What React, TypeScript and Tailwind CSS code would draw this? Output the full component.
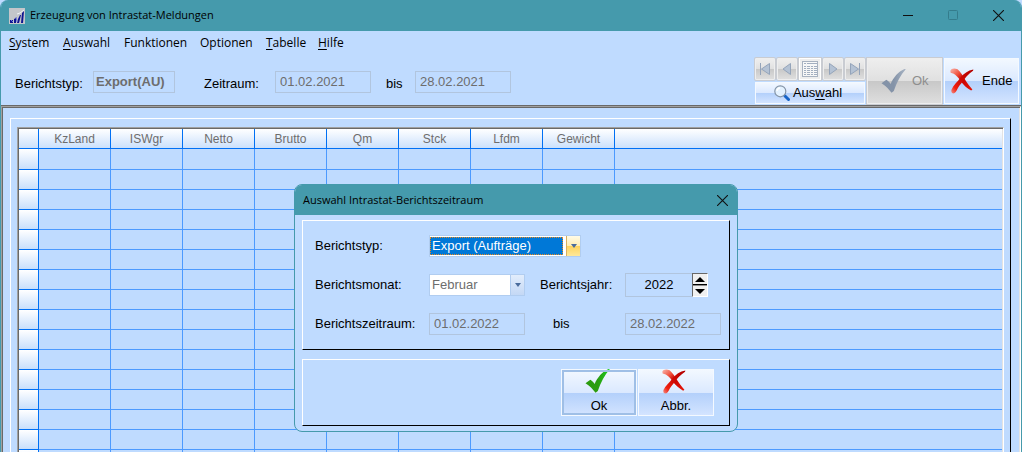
import React, { useState } from 'react';

const columns = ['KzLand', 'ISWgr', 'Netto', 'Brutto', 'Qm', 'Stck', 'Lfdm', 'Gewicht'];
const rows = Array.from({ length: 16 }, (_, i) => i);

const menu = [
  { key: 'S', rest: 'ystem', width: 'w-[54px]' },
  { key: 'A', rest: 'uswahl', width: 'w-[61px]' },
  { key: '', rest: 'Funktionen', width: 'w-[76px]' },
  { key: '', rest: 'Optionen', width: 'w-[66px]' },
  { key: 'T', rest: 'abelle', width: 'w-[52px]' },
  { key: 'H', rest: 'ilfe', width: 'w-[40px]' },
];

const glossy =
  'border border-[#f4f9ff] bg-[linear-gradient(to_bottom,#f2f8ff_0%,#dbe9ff_50%,#b3d0fb_51%,#d3e4ff_100%)]';
const glossyGrey =
  'border border-[#eeeeee] bg-[linear-gradient(to_bottom,#eeeeee_0%,#e0e0e0_50%,#c8c8c8_51%,#dedede_100%)] shadow-[0_0_0_1px_#c9ccd2]';
const field = 'h-[22px] border border-[#b1c5de] bg-transparent px-1 pb-[2px] text-[#6d6d6d] outline-none';

function CrossIcon({ id, className }: { id: string; className: string }) {
  return (
    <svg viewBox="0 0 76 82" className={className} preserveAspectRatio="none" aria-hidden="true">
      <defs>
        <linearGradient id={id + 'a'} x1="0" y1="0" x2="1" y2="1">
          <stop offset="0" stopColor="#f8b8b0" />
          <stop offset="0.3" stopColor="#f0503c" />
          <stop offset="0.5" stopColor="#c80000" />
          <stop offset="1" stopColor="#e81808" />
        </linearGradient>
        <linearGradient id={id + 'b'} x1="1" y1="0" x2="0" y2="1">
          <stop offset="0" stopColor="#b00000" />
          <stop offset="0.5" stopColor="#d00a04" />
          <stop offset="0.8" stopColor="#f02010" />
          <stop offset="1" stopColor="#f39088" />
        </linearGradient>
      </defs>
      <path d="M1 9C3 1 14-1 24 4C34 13 41 24 46 34C54 47 62 57 71 68L67 71C54 64 44 54 35 43C27 30 16 17 2 15Z" fill={'url(#' + id + 'a)'} />
      <path d="M5 68C10 55 24 44 33 31C43 18 57 8 74 5L73 9C59 18 46 34 36 48C26 59 22 70 18 76C12 84 1 80 5 68Z" fill={'url(#' + id + 'b)'} />
    </svg>
  );
}

function CheckIcon({ id, from, to, className }: { id: string; from: string; to: string; className: string }) {
  return (
    <svg viewBox="0 0 76 74" className={className} aria-hidden="true">
      <defs>
        <linearGradient id={id} x1="0" y1="0" x2="1" y2="0">
          <stop offset="0" stopColor={from} />
          <stop offset="0.5" stopColor={from} />
          <stop offset="1" stopColor={to} />
        </linearGradient>
      </defs>
      <path d="M1 44L16 33C22 37 26 41 29 46C38 27 52 8 72 0L76 1C60 18 48 42 39 68L32 73C23 64 16 52 1 44Z" fill={'url(#' + id + ')'} />
    </svg>
  );
}

function CloseGlyph() {
  return (
    <svg viewBox="0 0 10 10" className="size-[11px]" stroke="#101010" strokeWidth="1" fill="none" aria-hidden="true">
      <path d="M0 0L10 10M10 0L0 10" />
    </svg>
  );
}

function NavButton({ label, children }: { label: string; children: React.ReactNode }) {
  return (
    <button disabled aria-label={label} className={'flex h-[22px] w-5 items-center justify-center rounded-[1px] ' + glossyGrey}>
      <svg viewBox="0 0 14 14" className="size-[14px] shrink-0" fill="#b4c2d4" stroke="#94a4ba" aria-hidden="true">
        {children}
      </svg>
    </button>
  );
}

function Combo({
  id, options, box, text, arrow, tone, wrap,
}: { id: string; options: string[]; box: string; text: string; arrow: string; tone: string; wrap: string }) {
  return (
    <div className={'flex h-[22px] border bg-white ' + wrap}>
      <div className={'grid min-w-0 flex-1 ' + box}>
        <select id={id} className={'w-full appearance-none truncate outline-none ' + text}>
          {options.map((o) => (
            <option key={o}>{o}</option>
          ))}
        </select>
      </div>
      <span className={'pointer-events-none flex w-[14px] items-center justify-center border-l ' + arrow}>
        <svg viewBox="0 0 6 4" className="h-1 w-[6px]" aria-hidden="true">
          <path d="M0 0H6L3 4Z" fill={tone} />
        </svg>
      </span>
    </div>
  );
}

function SelectionDialog() {
  const [year, setYear] = useState(2022);
  const panel = 'border border-b-black border-l-white border-r-black border-t-white';
  return (
    <section
      role="dialog"
      aria-labelledby="dialog-title"
      className="absolute left-[293px] top-[184px] w-[444px] overflow-hidden rounded-lg border border-[#459aac] bg-[#bfdbff]"
    >
      <header className="flex h-[30px] items-center justify-between bg-[#459aac] pl-2 pr-[9px] font-['Open_Sans','Noto_Sans',sans-serif] text-[11px]">
        <h2 id="dialog-title">Auswahl Intrastat-Berichtszeitraum</h2>
        <button aria-label="Schließen"><CloseGlyph /></button>
      </header>
      <div className="flex flex-col gap-[9px] px-[7px] pb-[5px] pt-[5px]">
        <div className={'grid grid-cols-[114px_96px_100px_96px] content-start gap-y-[17px] pb-[14px] pl-3 pt-[14px] ' + panel}>
          <label htmlFor="typ" className="leading-[22px]">Berichtstyp:</label>
          <div className="col-span-3">
            <Combo
              id="typ"
              options={['Export (Aufträge)', 'Import (Bestellungen)']}
              wrap="w-[152px] border-[#b1cdf0]"
              box="mr-[3px] py-px"
              text="border border-dotted border-[#e88a20] bg-[#0078d7] pl-px leading-4 text-white"
              arrow="border-[#d8b060] bg-[linear-gradient(to_bottom,#fffbe8_0%,#ffecb0_50%,#ffd45c_51%,#ffe89a_100%)]"
              tone="#4a6c9c"
            />
          </div>
          <label htmlFor="monat" className="leading-[22px]">Berichtsmonat:</label>
          <Combo
            id="monat"
            options={['Februar', 'März', 'April']}
            wrap="border-[#b1cdf0]"
            box=""
            text="bg-white pl-[2px] text-[#6d6d6d]"
            arrow="border-[#b1cdf0] bg-[linear-gradient(to_bottom,#e2edfc,#c4d8f5)]"
            tone="#4a6c9c"
          />
          <label htmlFor="jahr" className="pl-[15px] leading-[22px]">Berichtsjahr:</label>
          <div className="-my-px flex h-6">
            <input
              id="jahr"
              value={year}
              onChange={(e) => setYear(Number(e.target.value) || 0)}
              className="w-[67px] border border-r-0 border-[#b1c5de] bg-transparent text-center outline-none"
            />
            <div className="flex w-4 flex-col border border-b-white border-l-[#696969] border-r-white border-t-[#696969] bg-[#f0f0f0]">
              <button aria-label="Jahr erhöhen" onClick={() => setYear(year + 1)} className="flex flex-1 items-center justify-center border-b border-black">
                <svg viewBox="0 0 10 5" className="h-[5px] w-[10px]"><path d="M0 5H10L5 0Z" /></svg>
              </button>
              <button aria-label="Jahr verringern" onClick={() => setYear(year - 1)} className="flex flex-1 items-center justify-center border-t border-[#8c8c8c]">
                <svg viewBox="0 0 10 5" className="h-[5px] w-[10px]"><path d="M0 0H10L5 5Z" /></svg>
              </button>
            </div>
          </div>
          <label htmlFor="von2" className="leading-[22px]">Berichtszeitraum:</label>
          <input id="von2" readOnly value="01.02.2022" className={field} />
          <label htmlFor="bis2" className="pl-7 leading-[22px]">bis</label>
          <input id="bis2" readOnly value="28.02.2022" className={field} />
        </div>
        <div className={'flex justify-end gap-px pb-[9px] pr-[15px] pt-[9px] ' + panel}>
          <button className={'flex h-[47px] w-[76px] flex-col items-center outline outline-2 -outline-offset-3 outline-[#9fbfe6] ' + glossy}>
            <CheckIcon id="okay" from="#2c9c10" to="#18d020" className="-ml-1 -mt-px h-6 w-[25px] shrink-0" />
            <span className="mt-[5px] leading-4">Ok</span>
          </button>
          <button className={'flex h-[47px] w-[76px] flex-col items-center ' + glossy}>
            <CrossIcon id="cancel" className="-ml-1 -mt-px h-[25px] w-6 shrink-0" />
            <span className="mt-1 leading-4">Abbr.</span>
          </button>
        </div>
      </div>
    </section>
  );
}

export default function App() {
  return (
    <div className="h-screen bg-[#bfdbff] font-['Liberation_Sans',Arial,sans-serif] text-[13px] text-black">
      <div className="relative flex h-full flex-col overflow-hidden rounded-t-lg border-x border-[#459aac] bg-[#bfdbff]">
        <header className="flex h-[31px] shrink-0 items-center bg-[#459aac] pl-2 font-['Open_Sans','Noto_Sans',sans-serif] text-[11px]">
          <svg viewBox="0 0 16 16" className="size-4" aria-hidden="true">
            <path d="M0 0H16V16H0Z" fill="#c4c6ca" />
            <path d="M1 12H4V15H1ZM5 11L7 10V15H5ZM9 11L11 7H12L11 11L10 15H8ZM13 5L15 3L14 15H12Z" fill="#101490" />
            <path d="M2 12L4 14M7 9L8 14" stroke="#6a76dc" fill="none" />
            <path d="M8 6L11 5L15 2" stroke="#f2f4f8" fill="none" />
          </svg>
          <h1 className="ml-[5px] flex-1">Erzeugung von Intrastat-Meldungen</h1>
          <div className="flex items-center gap-[34px] pr-[17px]">
            <button aria-label="Minimieren"><svg viewBox="0 0 11 11" className="size-[11px]"><path d="M0 5.5H10" stroke="#101010" /></svg></button>
            <button aria-label="Maximieren" disabled><svg viewBox="0 0 11 11" className="size-[11px]"><rect x="0.5" y="0.5" width="9" height="9" rx="1" stroke="#347c8c" fill="none" /></svg></button>
            <button aria-label="Schließen"><CloseGlyph /></button>
          </div>
        </header>

        <nav className="flex h-6 shrink-0 items-center pl-2 font-['Open_Sans','Noto_Sans',sans-serif] text-[12px]">
          {menu.map((m) => (
            <button key={m.rest} className={'text-left ' + m.width}>
              {m.key && <span className="underline underline-offset-2">{m.key}</span>}
              {m.rest}
            </button>
          ))}
        </nav>

        <div className="flex h-[51px] shrink-0 items-start justify-between border-b border-[#696969] pr-[2px] pt-[3px]">
          <form className="flex items-center pl-[14px] pt-[13px]">
            <label htmlFor="typ1" className="w-[78px] pt-[3px]">Berichtstyp:</label>
            <input id="typ1" readOnly value="Export(AU)" className={'w-[82px] !px-[2px] font-bold ' + field} />
            <label htmlFor="von1" className="ml-[29px] w-[71px] pt-[3px]">Zeitraum:</label>
            <input id="von1" readOnly value="01.02.2021" className={'w-24 ' + field} />
            <label htmlFor="bis1" className="ml-[15px] w-[29px] pt-[3px]">bis</label>
            <input id="bis1" readOnly value="28.02.2021" className={'w-24 ' + field} />
          </form>
          <div className="flex gap-[2px]">
            <div className="flex w-[110px] flex-col gap-[2px]">
              <div className="flex justify-between">
                <NavButton label="Erster Satz"><path d="M2.5 1V13M11.5 1.5V12.5L3.5 7Z" /></NavButton>
                <NavButton label="Voriger Satz"><path d="M10.5 1.5V12.5L3 7Z" /></NavButton>
                <button disabled aria-label="Tabelle" className="flex h-[22px] w-[22px] items-center justify-center border border-white bg-[#eeeeee] shadow-[0_0_0_1px_#c9ccd2]">
                  <svg viewBox="0 0 16 16" className="size-4 shrink-0" aria-hidden="true">
                    <rect x="0.5" y="0.5" width="15" height="15" fill="#f8f8f8" stroke="#a8b2c0" />
                    <path d="M2 2.5H15M2 5.5H15M2 7.5H15M2 9.5H15M2 11.5H15M2 13.5H15" stroke="#a3afc0" />
                    <path d="M4.5 1V15M8.5 4V15M11.5 4V15" stroke="#f4f4f4" />
                  </svg>
                </button>
                <NavButton label="Nächster Satz"><path d="M3.5 1.5V12.5L11 7Z" /></NavButton>
                <NavButton label="Letzter Satz"><path d="M11.5 1V13M2.5 1.5V12.5L10.5 7Z" /></NavButton>
              </div>
              <button className={'flex h-[22px] items-center justify-center gap-[3px] pr-1 ' + glossy}>
                <svg viewBox="0 0 16 16" className="size-4" aria-hidden="true">
                  <path d="M11 11L14.5 14.5" stroke="#1764c8" strokeWidth="3" strokeLinecap="round" />
                  <circle cx="6.3" cy="6.3" r="5.5" fill="#e4f2ff" stroke="#8494a6" strokeWidth="1.2" />
                  <path d="M3 6A3.4 3.4 0 0 1 6 3" stroke="#fff" strokeWidth="1.4" fill="none" />
                </svg>
                <span>Aus<span className="underline underline-offset-2">w</span>ahl</span>
              </button>
            </div>
            <button disabled className={'flex h-[46px] w-[75px] items-center gap-[6px] pl-[13px] text-[#8e8e8e] ' + glossyGrey}>
              <CheckIcon id="okgrey" from="#8493a8" to="#a8b4c4" className="h-6 w-[25px]" />
              Ok
            </button>
            <button className={'flex h-[46px] w-[75px] items-center gap-2 pl-[5px] ' + glossy}>
              <CrossIcon id="end" className="h-[26px] w-6" />
              Ende
            </button>
          </div>
        </div>

        <main className="flex min-h-0 flex-1 border border-b-0 border-l-[#a0a0a0] border-r-white border-t-[#a0a0a0] pl-2 pr-[9px] pt-[11px] shadow-[inset_1px_1px_0_#696969,inset_-1px_0_0_#e3e3e3]">
          <div className="flex min-w-0 flex-1 border border-b-0 border-l-white border-r-black border-t-white px-[6px] pt-2">
            <div className="min-w-0 flex-1 overflow-hidden border border-b-0 border-l-[#a0a0a0] border-r-white border-t-[#a0a0a0] px-px pt-px shadow-[inset_1px_1px_0_#696969,inset_-1px_0_0_#e3e3e3]">
              <table className="w-full table-fixed border-separate border-spacing-0 text-[12px] text-[#6d6d6d]">
                <colgroup>
                  <col className="w-5" />
                  {columns.map((c) => <col key={c} className="w-[72px]" />)}
                  <col />
                </colgroup>
                <thead>
                  <tr className="h-5 bg-[linear-gradient(to_bottom,#ffffff,#c8dffc)]">
                    <td className="border-b border-r border-[#0070f4]" />
                    {columns.map((c) => (
                      <th key={c} scope="col" className="border-b border-r border-[#0070f4] p-0 pt-px font-normal leading-[18px]">{c}</th>
                    ))}
                    <td className="border-b border-[#0070f4]" />
                  </tr>
                </thead>
                <tbody>
                  {rows.map((r) => (
                    <tr key={r} className="h-5 first:h-[21px]">
                      <td className="border-b border-r border-[#0070f4] bg-[linear-gradient(to_bottom,#ffffff,#c8dffc)]" />
                      {columns.map((c) => <td key={c} className="border-b border-r border-[#4c9aff]" />)}
                      <td className="border-b border-[#4c9aff]" />
                    </tr>
                  ))}
                </tbody>
              </table>
            </div>
          </div>
        </main>
        <SelectionDialog />
      </div>
    </div>
  );
}
